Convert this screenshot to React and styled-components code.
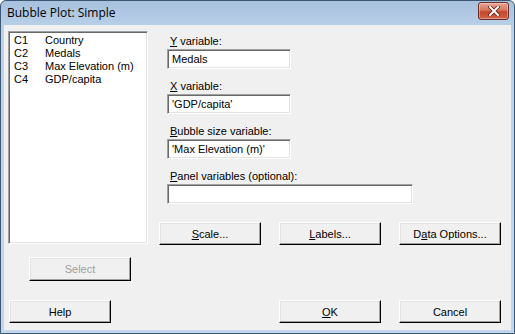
import styled, { createGlobalStyle } from "styled-components"

const Global = createGlobalStyle`
    html, body {
        margin: 0;
        padding: 0;
        background: #ffffff;
    }
    body {
        font-family: "Liberation Sans", Arial, sans-serif;
        font-size: 11px;
    }
`

const Window = styled.div`
    width: 515px;
    height: 334px;
    box-sizing: border-box;
    display: flex;
    flex-direction: column;
    border: 1px solid #3e5874;
    border-radius: 6px 6px 0 0;
    background: linear-gradient(180deg, #a7c1de 0%, #bcd2ea 30px, #c2d7ee 100%);
    padding: 0 3px 3px 3px;
    overflow: hidden;
`
const TitleBar = styled.div`
    height: 24px;
    display: flex;
    align-items: center;
    justify-content: space-between;
    padding: 0 2px 0 3px;
`
const Title = styled.div`
    font-family: "Open Sans", "Noto Sans", sans-serif;
    font-size: 12px;
    color: #000;
    margin-top: -2px;
`
const CloseBtn = styled.div`
    width: 29px;
    height: 16px;
    margin-top: -4px;
    border: 1px solid #6b2b25;
    border-radius: 3px;
    background: linear-gradient(180deg, #e8a493 0%, #d47560 45%, #c4452c 55%, #d0654a 100%);
    box-shadow: inset 0 0 0 1px rgba(255, 255, 255, 0.35);
    display: flex;
    align-items: center;
    justify-content: center;
`
const Client = styled.div`
    flex: 1;
    background: #f0f0f0;
    display: flex;
    flex-direction: column;
    padding: 6px 10px 7px 4px;
    color: #000;
`
const Top = styled.div`
    display: flex;
`
const Left = styled.div`
    width: 141px;
    display: flex;
    flex-direction: column;
`
const ListBox = styled.div`
    height: 213px;
    box-sizing: border-box;
    background: #fff;
    border: 1px solid;
    border-color: #a0a0a0 #fff #fff #a0a0a0;
    box-shadow: inset 1px 1px 0 #696969, inset -1px -1px 0 #e3e3e3;
    padding: 2px 0 0 5px;
`
const ListRow = styled.div`
    display: flex;
    height: 13px;
    line-height: 13px;
`
const ColId = styled.span`
    width: 31px;
`
const Right = styled.div`
    margin-left: 11px;
    padding-top: 4px;
    display: flex;
    flex-direction: column;
    flex: 1;
`
const Field = styled.div`
    display: flex;
    flex-direction: column;
    padding-left: 8px;
    margin-bottom: 11px;
`
const Label = styled.div`
    height: 13px;
    line-height: 13px;
    padding-left: 3px;
    margin-bottom: 1px;
`
const Input = styled.div`
    width: ${({ wide }) => (wide ? "246px" : "124px")};
    height: 20px;
    box-sizing: border-box;
    background: #fff;
    border: 1px solid;
    border-color: #a0a0a0 #fff #fff #a0a0a0;
    box-shadow: inset 1px 1px 0 #696969, inset -1px -1px 0 #e3e3e3;
    padding: 0 4px;
    line-height: 18px;
    white-space: nowrap;
`
const ButtonRow = styled.div`
    display: flex;
    gap: 18px;
    margin-top: 7px;
`
const Button = styled.div`
    width: 102px;
    height: ${({ tall }) => (tall ? "24px" : "23px")};
    box-sizing: border-box;
    border: 1px solid;
    border-color: #fff #000 #000 #fff;
    box-shadow: inset -1px -1px 0 #a0a0a0, inset 1px 1px 0 #e3e3e3;
    background: #f0f0f0;
    display: flex;
    align-items: center;
    justify-content: center;
    color: ${({ disabled }) => (disabled ? "#a0a0a0" : "#000")};
    margin-left: ${({ offset }) => offset || "0"};
    margin-top: ${({ top }) => top || "0"};
`
const Bottom = styled.div`
    display: flex;
    margin-top: auto;
    padding-left: 1px;
`
const Spacer = styled.div`
    flex: 1;
`
const Pair = styled.div`
    display: flex;
    gap: 18px;
`

const columns = [
    ["C1", "Country"],
    ["C2", "Medals"],
    ["C3", "Max Elevation (m)"],
    ["C4", "GDP/capita"],
]

const App = () => {
    return (
        <>
            <Global />
            <Window>
                <TitleBar>
                    <Title>Bubble Plot: Simple</Title>
                    <CloseBtn>
                        <svg width="12" height="10" viewBox="0 0 12 10">
                            <path d="M2 1 L10 9 M10 1 L2 9" stroke="#5a1a12" strokeWidth="3.4" strokeLinecap="square" />
                            <path d="M2 1 L10 9 M10 1 L2 9" stroke="#ffffff" strokeWidth="2" strokeLinecap="square" />
                        </svg>
                    </CloseBtn>
                </TitleBar>
                <Client>
                    <Top>
                        <Left>
                            <ListBox>
                                {columns.map(([id, name]) => (
                                    <ListRow key={id}>
                                        <ColId>{id}</ColId>
                                        <span>{name}</span>
                                    </ListRow>
                                ))}
                            </ListBox>
                            <Button disabled tall offset="21px" top="13px">Select</Button>
                        </Left>
                        <Right>
                            <Field>
                                <Label><u>Y</u> variable:</Label>
                                <Input>Medals</Input>
                            </Field>
                            <Field>
                                <Label><u>X</u> variable:</Label>
                                <Input>'GDP/capita'</Input>
                            </Field>
                            <Field>
                                <Label><u>B</u>ubble size variable:</Label>
                                <Input>'Max Elevation (m)'</Input>
                            </Field>
                            <Field>
                                <Label><u>P</u>anel variables (optional):</Label>
                                <Input wide />
                            </Field>
                            <ButtonRow>
                                <Button><u>S</u>cale...</Button>
                                <Button><u>L</u>abels...</Button>
                                <Button>D<u>a</u>ta Options...</Button>
                            </ButtonRow>
                        </Right>
                    </Top>
                    <Bottom>
                        <Button>Help</Button>
                        <Spacer />
                        <Pair>
                            <Button><u>O</u>K</Button>
                            <Button>Cancel</Button>
                        </Pair>
                    </Bottom>
                </Client>
            </Window>
        </>
    )
}

export default App
